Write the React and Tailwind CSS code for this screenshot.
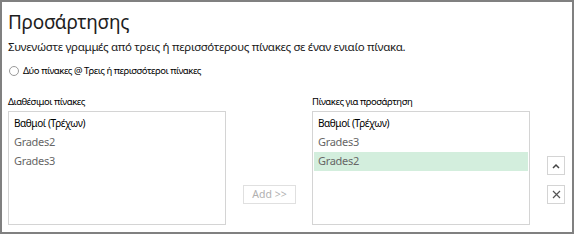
import React from "react";

const font = { fontFamily: '"Noto Sans", "DejaVu Sans", sans-serif' };

function ListBox({ items, selected }) {
  return (
    <div className="w-[218px] h-[114px] border border-[#d4d4d4] bg-white pt-[2px] px-[1px]">
      {items.map((it, i) => (
        <div
          key={i}
          className={
            "h-[19px] flex items-center pl-[4px] " +
            (it === selected ? "bg-[#d3eedd] " : "") +
            (i === 0 ? "text-[10px] tracking-[-0.4px] text-black" : "text-[11px] tracking-[-0.3px] text-[#666666]")
          }
        >
          {it}
        </div>
      ))}
    </div>
  );
}

export default function App() {
  return (
    <div
      className="w-[574px] h-[234px] border-2 border-[#808080] bg-white pl-[6px] pr-[7px] flex flex-col"
      style={font}
    >
      <div className="text-[19px] leading-[24px] mt-[8px] text-[#1e1e1e] tracking-[-0.3px]">Προσάρτησης</div>
      <div className="text-[11.5px] leading-[16px] mt-[5px] text-[#1a1a1a] tracking-[-0.3px]">
        Συνενώστε γραμμές από τρεις ή περισσότερους πίνακες σε έναν ενιαίο πίνακα.
      </div>
      <div className="flex items-center mt-[9px] h-[14px]">
        <span className="w-[10px] h-[10px] rounded-full border border-[#9a9a9a] mr-[4px] ml-[1px]"></span>
        <span className="text-[9.5px] text-black tracking-[-0.45px]">Δύο πίνακες @ Τρεις ή περισσότεροι πίνακες</span>
      </div>
      <div className="flex mt-[17px]">
        <div className="flex flex-col">
          <div className="text-[9.5px] leading-[13px] text-black tracking-[-0.45px] mb-[3px]">Διαθέσιμοι πίνακες</div>
          <ListBox items={["Βαθμοί (Τρέχων)", "Grades2", "Grades3"]} />
        </div>
        <div className="flex flex-col justify-end ml-[17px] mr-[16px] pb-[21px]">
          <div className="w-[53px] h-[19px] border border-[#e0e0e0] flex items-center justify-center text-[10.5px] text-[#b0b0b0]">
            Add &gt;&gt;
          </div>
        </div>
        <div className="flex flex-col">
          <div className="text-[9.5px] leading-[13px] text-black tracking-[-0.45px] mb-[3px]">Πίνακες για προσάρτηση</div>
          <div className="w-[217px]">
            <ListBox items={["Βαθμοί (Τρέχων)", "Grades3", "Grades2"]} selected="Grades2" />
          </div>
        </div>
        <div className="flex flex-col justify-end ml-[18px] pb-[21px] gap-[10px]">
          <div className="w-[18px] h-[19px] border border-[#d4d4d4] flex items-center justify-center">
            <svg width="8" height="6" viewBox="0 0 8 6"><path d="M1 5 L4 2 L7 5" stroke="#444" strokeWidth="1.5" fill="none" /></svg>
          </div>
          <div className="w-[18px] h-[19px] border border-[#d4d4d4] flex items-center justify-center">
            <svg width="9" height="9" viewBox="0 0 9 9"><path d="M1 1 L8 8 M8 1 L1 8" stroke="#555" strokeWidth="1.2" fill="none" /></svg>
          </div>
        </div>
      </div>
    </div>
  );
}
